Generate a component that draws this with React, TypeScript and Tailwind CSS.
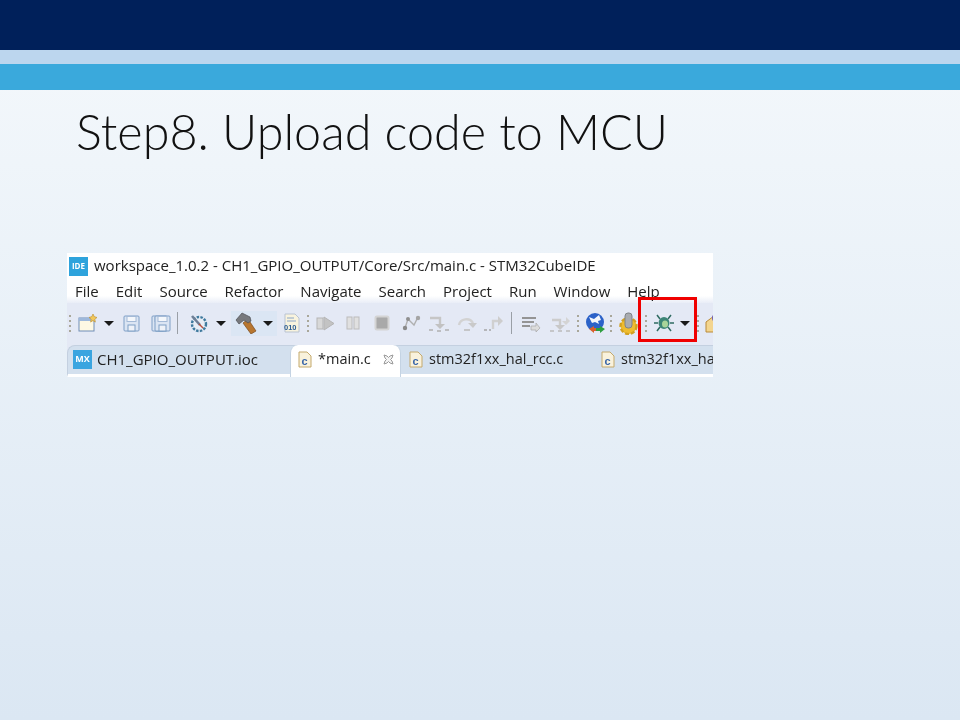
import React from "react";

const ui = "font-['Open_Sans','Noto_Sans',sans-serif]";

function Caret() {
  return <div className="w-0 h-0 border-x-[5px] border-x-transparent border-t-[5px] border-t-[#1a1a1a] shrink-0" />;
}

function Grip({ className = "" }: { className?: string }) {
  return (
    <div className={`flex flex-col gap-[3px] shrink-0 ${className}`}>
      {[0, 1, 2, 3].map((i) => (
        <div key={i} className="w-[2px] h-[2px] bg-[#a9a79a]" />
      ))}
    </div>
  );
}

function Sep() {
  return <div className="w-[1px] h-[22px] bg-[#9a9fa6] shrink-0" />;
}

function Ico({ w = 18, children }: { w?: number; children: React.ReactNode }) {
  return (
    <svg width={w} height="20" viewBox={`0 0 ${w} 20`} className="shrink-0">
      {children}
    </svg>
  );
}

function CFile() {
  return (
    <svg width="14" height="17" viewBox="0 0 14 17" className="shrink-0">
      <path d="M1 1h8l4 4v11H1z" fill="#f9f2dc" stroke="#c4a96c" />
      <text x="3.5" y="14" fontSize="11" fontWeight="700" fill="#3a66a8" fontFamily="Liberation Sans">c</text>
    </svg>
  );
}

function Save({ x = 0 }: { x?: number }) {
  return (
    <g transform={`translate(${x} 0)`}>
      <rect x="1" y="3" width="15" height="15" rx="1" fill="#dbe5f3" stroke="#7f9fc6" />
      <rect x="4" y="3.5" width="9" height="5" fill="#f4f7fb" stroke="#a4bad7" />
      <rect x="5" y="12" width="7" height="6" fill="#eef2f8" stroke="#7f9fc6" />
    </g>
  );
}

export default function App() {
  return (
    <div className="w-[960px] h-[720px] overflow-hidden bg-gradient-to-b from-[#f5f9fc] to-[#dbe7f3]">
      <div className="h-[50px] bg-[#00205a]" />
      <div className="h-[14px] bg-[#bcd6ee]" />
      <div className="h-[26px] bg-[#3aa9dc]" />

      <h1 className="pl-[76px] pt-[11px] h-[163px] text-[48.5px] leading-[60px] font-light text-[#111] font-['Lato',sans-serif]">
        Step8. Upload code to MCU
      </h1>

      <div className={`relative ml-[67px] w-[646px] h-[124px] ${ui} text-[#222] text-[15px]`}>
        <div className="w-[646px] h-[124px] overflow-hidden blur-[0.4px]">
          <div className="h-[26px] bg-white flex items-center pl-[2px] gap-[6px]">
            <div className="w-[19px] h-[19px] bg-[#2ea3dc] text-white text-[8px] font-bold flex items-center justify-center">IDE</div>
            <span className="whitespace-nowrap -mt-[2px]">workspace_1.0.2 - CH1_GPIO_OUTPUT/Core/Src/main.c - STM32CubeIDE</span>
          </div>

          <div className="h-[24px] bg-gradient-to-b from-white from-70% to-[#e9edf7] flex items-center pl-[8px] gap-[17px] whitespace-nowrap">
            <span>File</span>
            <span>Edit</span>
            <span>Source</span>
            <span>Refactor</span>
            <span>Navigate</span>
            <span>Search</span>
            <span>Project</span>
            <span>Run</span>
            <span>Window</span>
            <span>Help</span>
          </div>

          <div className="h-[40px] bg-[#e4e9f5] flex items-center pl-[2px] overflow-hidden">
            <Grip className="mr-[7px]" />
            <Ico w={20}>
              <rect x="1" y="5" width="15" height="13" fill="#fdf8e4" stroke="#6f8eb8" />
              <rect x="1" y="5" width="15" height="3" fill="#9db8dc" />
              <path d="M15 1l1.2 2.6L19 4.5l-2.2 1.8.6 2.8-2.4-1.5-2.4 1.5.6-2.8L11 4.5l2.8-.9z" fill="#f1c75c" stroke="#b98b2a" strokeWidth="0.6" />
            </Ico>
            <div className="w-[6px] shrink-0" />
            <Caret />
            <div className="w-[9px] shrink-0" />
            <Ico><Save /></Ico>
            <div className="w-[10px] shrink-0" />
            <Ico w={20}>
              <Save x={0} />
              <Save x={3} />
            </Ico>
            <div className="w-[6px] shrink-0" />
            <Sep />
            <div className="w-[11px] shrink-0" />
            <Ico w={20}>
              <circle cx="10" cy="11" r="7" fill="#e8eef6" stroke="#3f7a9e" strokeWidth="2.4" strokeDasharray="2.5 1.3" />
              <path d="M3 3l8 9" stroke="#6e7f96" strokeWidth="2.6" />
              <path d="M10 11l4 4" stroke="#b9503f" strokeWidth="1.5" />
            </Ico>
            <div className="w-[7px] shrink-0" />
            <Caret />
            <div className="w-[5px] shrink-0" />
            <div className="flex items-center h-[25px] w-[46px] bg-[#dbe6f4] shrink-0 pl-[4px]">
              <svg width="22" height="22" viewBox="0 0 22 22" className="shrink-0">
                <path d="M8 11l5-4 8 12-5 3z" fill="#b8762f" stroke="#7a4a1d" strokeWidth="0.7" />
                <path d="M1 8l6-7 8 4 1 4-3 2-4-3-5 4z" fill="#77797d" stroke="#4d4f54" strokeWidth="0.7" />
              </svg>
              <div className="w-[6px] shrink-0" />
              <Caret />
            </div>
            <div className="w-[7px] shrink-0" />
            <svg width="16" height="20" viewBox="0 0 16 20" className="shrink-0">
              <path d="M1 1h10l4 4v14H1z" fill="#f8f3de" stroke="#b9c3d2" />
              <path d="M3 5h7M3 8h9" stroke="#8aa5c8" />
              <text x="0" y="17" fontSize="7.5" fontWeight="700" fill="#2f5f94" fontFamily="Liberation Sans">010</text>
            </svg>
            <div className="w-[7px] shrink-0" />
            <Grip className="mr-[7px]" />
            <Ico w={20}>
              <rect x="1" y="5" width="6" height="11" fill="#d8d8d8" stroke="#b5b5b5" />
              <path d="M8 4l10 6.5L8 17z" fill="#c3c3c3" stroke="#b5b5b5" />
            </Ico>
            <div className="w-[10px] shrink-0" />
            <Ico w={14}>
              <rect x="1" y="4" width="5" height="12" fill="#e0e0e0" stroke="#bcbcbc" />
              <rect x="8" y="4" width="5" height="12" fill="#e0e0e0" stroke="#bcbcbc" />
            </Ico>
            <div className="w-[14px] shrink-0" />
            <Ico w={16}>
              <rect x="1.5" y="3.5" width="13" height="13" rx="1.5" fill="#a9a9a9" stroke="#d4d4d4" strokeWidth="2" />
            </Ico>
            <div className="w-[12px] shrink-0" />
            <Ico w={20}>
              <path d="M3 15L6 6l6 6 4-8" fill="none" stroke="#b0b0b0" strokeWidth="1.4" />
              <circle cx="3" cy="15" r="2.2" fill="#8a8a8a" />
              <circle cx="6" cy="6" r="2" fill="#8f8f8f" />
              <circle cx="16" cy="5" r="2.2" fill="#a5a5a5" />
            </Ico>
            <div className="w-[6px] shrink-0" />
            <Ico w={22}>
              <path d="M2 5h10v7" fill="none" stroke="#c6c6c6" strokeWidth="2.4" />
              <path d="M7 11h10l-5 5z" fill="#c2c2c2" />
              <path d="M1 17h4M9 18h4M17 17h4" stroke="#b0b0b0" strokeWidth="1.4" />
            </Ico>
            <div className="w-[6px] shrink-0" />
            <Ico w={22}>
              <path d="M3 12a7.5 7 0 0 1 14-2" fill="none" stroke="#d2d2d2" strokeWidth="2.4" />
              <path d="M12 10h9l-4 5z" fill="#c9c9c9" />
              <path d="M8 17h6" stroke="#bdbdbd" strokeWidth="1.6" />
            </Ico>
            <div className="w-[5px] shrink-0" />
            <Ico w={22}>
              <path d="M10 16V8h5" fill="none" stroke="#d0d0d0" strokeWidth="2.4" />
              <path d="M15 3l5 5-5 5z" fill="#cdcdcd" />
              <path d="M1 17h3M6 17h2" stroke="#a5a5a5" strokeWidth="1.4" />
            </Ico>
            <div className="w-[6px] shrink-0" />
            <Sep />
            <div className="w-[9px] shrink-0" />
            <Ico w={20}>
              <path d="M1 5h14M1 9h12M1 13h8" stroke="#949494" strokeWidth="2" />
              <path d="M10 13h5v-3l4 5-4 4v-2h-5z" fill="#dcdcdc" stroke="#a8a8a8" strokeWidth="0.7" />
            </Ico>
            <div className="w-[8px] shrink-0" />
            <Ico w={22}>
              <path d="M3 7h8v6" fill="none" stroke="#cccccc" strokeWidth="2.4" />
              <path d="M6 12h10l-5 5z" fill="#c8c8c8" />
              <path d="M13 8h4V4l4 4-4 4z" fill="#d4d4d4" />
              <path d="M1 18h4M9 18h4M17 18h4" stroke="#bbbbbb" strokeWidth="1.4" />
            </Ico>
            <div className="w-[6px] shrink-0" />
            <Grip className="mr-[6px]" />
            <svg width="22" height="22" viewBox="0 0 22 22" className="shrink-0">
              <circle cx="10" cy="10" r="9" fill="#2c62c8" />
              <path d="M4 5l5 2 5-4 2 5-3 1 1 3-4-2-3 1z" fill="#f4f7fc" />
              <path d="M4 17l5-3v2h2v3H9v2z" fill="#d9602e" />
              <path d="M20 17l-5-3v2h-4v3h4v2z" fill="#2e9e3f" />
            </svg>
            <div className="w-[3px] shrink-0" />
            <Grip className="mr-[6px]" />
            <svg width="22" height="24" viewBox="0 0 22 24" className="shrink-0">
              <circle cx="10.5" cy="15" r="8" fill="#eebc2f" stroke="#d2a021" strokeWidth="2.4" strokeDasharray="4 2" />
              <circle cx="10.5" cy="15" r="6.5" fill="#eebc2f" />
              <rect x="7" y="2" width="7" height="15" rx="3" fill="#a9acb0" stroke="#7e8287" />
            </svg>
            <div className="w-[5px] shrink-0" />
            <Grip className="mr-[7px]" />
            <svg width="20" height="20" viewBox="0 0 20 20" className="shrink-0">
              <g stroke="#2f6b62" strokeWidth="1.5" fill="none">
                <path d="M6 6L3 2M14 6l3-4M4 10H0M16 10h4M6 14l-3 4M14 14l3 4" />
              </g>
              <ellipse cx="10" cy="10" rx="5.5" ry="6" fill="#3d8577" />
              <ellipse cx="11" cy="11" rx="3" ry="3.5" fill="#a9d49a" />
            </svg>
            <div className="w-[6px] shrink-0" />
            <Caret />
            <div className="w-[7px] shrink-0" />
            <Grip className="mr-[6px]" />
            <svg width="20" height="20" viewBox="0 0 20 20" className="shrink-0">
              <path d="M1 9l8-6 9 6v10H1z" fill="#f3d58e" stroke="#b98a3a" />
              <circle cx="11" cy="5" r="4" fill="#6d5fb8" />
            </svg>
          </div>

          <div className="h-[34px] bg-[#e4e9f5] pt-[2px]">
            <div className="h-[32px] flex bg-[#d3e0ee] rounded-tl-[8px] border-t border-l border-[#c4d0e0] border-b-[3px] border-b-white text-[14.5px]">
              <div className="flex items-center shrink-0 w-[222px] pl-[5px] pb-[2px] gap-[5px] text-[15px]">
                <div className="w-[19px] h-[19px] bg-[#3aa5e0] text-white text-[9px] font-bold flex items-center justify-center shrink-0">MX</div>
                <span className="whitespace-nowrap">CH1_GPIO_OUTPUT.ioc</span>
              </div>
              <div className="flex items-center shrink-0 w-[111px] -mt-[1px] -mb-[3px] pb-[4px] pl-[7px] gap-[6px] bg-white rounded-t-[8px] border-x border-[#c4d3e3]">
                <CFile />
                <span className="whitespace-nowrap">*main.c</span>
                <svg width="13" height="13" viewBox="0 0 13 13" className="shrink-0 ml-[5px]">
                  <path d="M2 2l3 1 1.5 1.5L8 3l3-1-1 3-1.5 1.5L10 8l1 3-3-1-1.5-1.5L5 10l-3 1 1-3 1.5-1.5L3 5z" fill="#f4f4f4" stroke="#9a9a9a" />
                </svg>
              </div>
              <div className="flex items-center shrink-0 w-[192px] pl-[8px] pb-[2px] gap-[6px]">
                <CFile />
                <span className="whitespace-nowrap">stm32f1xx_hal_rcc.c</span>
              </div>
              <div className="flex items-center shrink-0 w-[120px] pl-[8px] pb-[2px] gap-[6px] overflow-hidden">
                <CFile />
                <span className="whitespace-nowrap">stm32f1xx_ha</span>
              </div>
            </div>
          </div>
        </div>

        <div className="absolute left-[571px] top-[44px] w-[59px] h-[45px] border-[3px] border-[#f00000]" />
      </div>
    </div>
  );
}
